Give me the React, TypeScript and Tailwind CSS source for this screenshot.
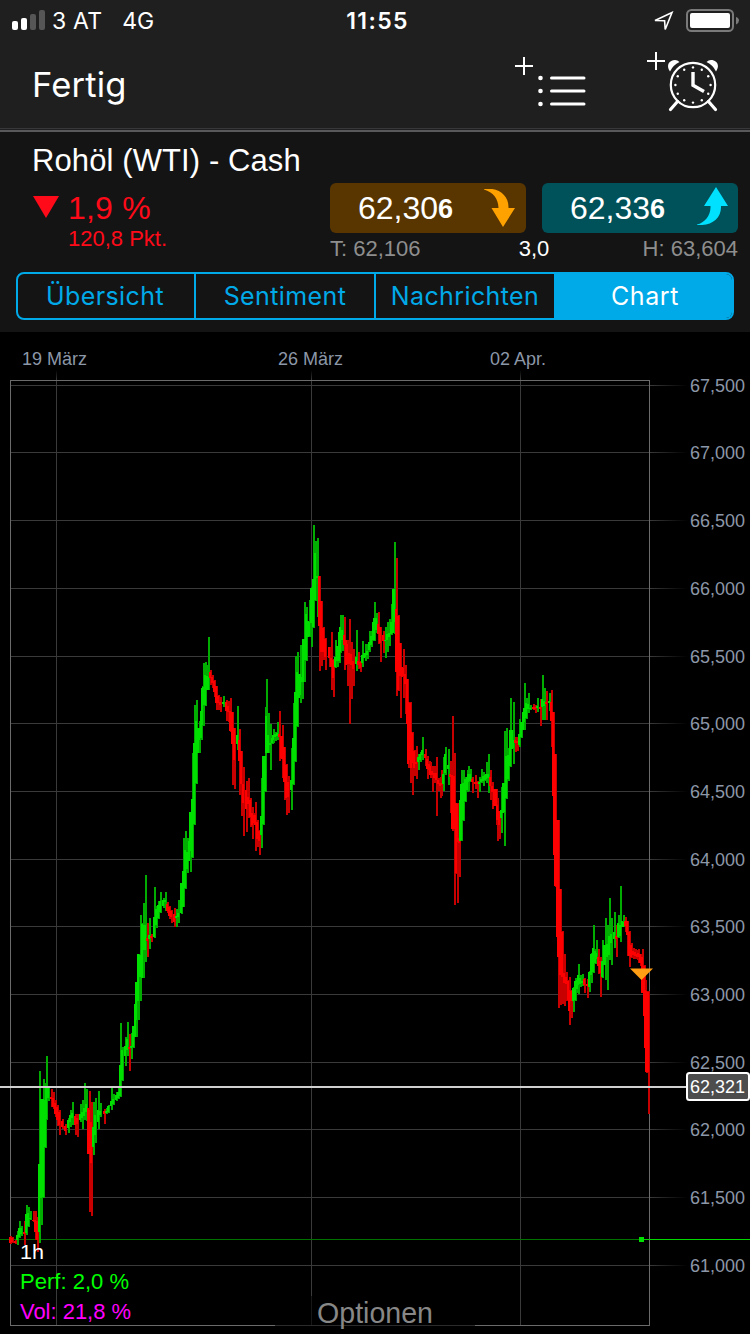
import React from 'react';

type Candle = {
  x: number;
  high: number;
  low: number;
  top: number;
  bottom: number;
  up: boolean;
};

// One entry per candle: direction, x, high, low and, where the body does not
// fill most of the range, its top and bottom.
const SERIES = `
r10,1236,1244,1237,1243 r12,1237,1243 r15,1240,1244 g17,1231,1245,1235,1240 g19,1221,1238,1228,1237 g21,1226,1236
r24,1221,1245,1232,1234 g26,1205,1235,1214,1233 g28,1207,1227,1213,1226 g30,1211,1220,1218,1219 r33,1211,1222,1220,1221
r35,1211,1240,1220,1232 r37,1217,1252,1221,1240 g39,1071,1243,1164,1232 g41,1099,1225,1099,1198 g43,1079,1198,1099,1197
g45,1083,1148,1100,1147 g46,1056,1120,1086,1119 g48,1086,1101,1088,1098 r51,1089,1107,1097,1099 r53,1092,1109,1098,1107
r55,1100,1117 r57,1105,1126,1107,1120 r59,1110,1135,1112,1125 r62,1119,1129 r65,1124,1135,1126,1131 g68,1118,1133,1120,1128
g70,1110,1127,1115,1122 g72,1102,1125,1113,1118 r75,1114,1135,1116,1125 r77,1114,1137,1118,1124 g80,1104,1122,1114,1120
g82,1100,1129,1112,1118 g84,1083,1120,1108,1116 g86,1089,1121,1104,1112 r88,1108,1154,1108,1154 r89,1091,1212,1110,1154
r91,1102,1216,1122,1163 g93,1102,1155,1127,1147 g95,1098,1143,1115,1135 g98,1091,1129,1110,1122 g100,1103,1117,1111,1115
r104,1109,1124,1111,1114 g106,1108,1114,1111,1113 g108,1105,1113 g111,1087,1110,1101,1106 g113,1094,1105,1099,1104
g116,1092,1101,1095,1100 g118,1088,1099,1092,1098 g120,1023,1097,1065,1096 g122,1047,1081,1050,1080 g125,1037,1066,1046,1056
g127,1022,1056,1039,1050 r129,1034,1071,1047,1049 g131,1033,1059,1046,1048 g133,1026,1048,1026,1047 g135,1004,1037,1004,1037
g136,982,1037,982,1020 g138,954,1020,954,1001 g140,915,1001,955,977 g142,923,978,924,978 g143,903,978,925,950
g145,875,962,925,950 r147,923,957,938,941 g149,918,949,935,939 r151,934,942,936,938 g154,887,938,917,937 g156,906,928
g158,901,919,905,918 g160,892,913,901,912 g163,898,908 g165,892,911,900,902 r167,902,913 r169,906,919,907,916
r171,910,923,911,917 r174,908,927,914,922 g176,909,927,916,918 g178,900,923,913,917 g181,883,914,883,913 g183,838,907,871,907
g185,831,889,850,888 g187,838,873,852,869 g189,841,861,841,861 g190,812,872,812,851 g192,753,858,799,857 g194,705,825,743,824
g196,700,784,721,783 g198,728,753,728,753 g199,721,753,728,740 g201,711,740,711,738 g202,686,726,688,725 g203,663,726,687,705
g205,662,706,675,705 g207,665,690,676,690 g208,637,690,677,690 r210,670,685,672,678 r212,675,688,677,683 r214,680,697,681,692
r216,686,710,686,703 r218,695,710,696,703 r220,697,712,702,705 g223,696,707,702,704 r226,700,721,702,711 r228,701,722,706,712
r230,698,732,711,731 r232,712,785,712,744 r234,728,789,728,760 g237,706,750,735,744 r239,729,795,740,761 r241,751,816,751,784
r243,767,836,784,803 r246,781,832,790,809 r248,778,818,797,804 r250,798,827,800,817 r252,807,839,813,825 r254,813,825
r255,802,851,815,825 r257,820,847,822,839 r259,830,855,831,841 g261,778,848,816,835 g263,756,825,756,824 g265,707,792,756,791
g266,679,753,716,753 g268,713,753,735,753 g270,724,770,743,745 g272,735,744,738,743 g273,729,743,735,740 g275,732,741,734,737
g277,722,740,733,736 r279,711,761,734,737 r281,736,758,736,758 r282,725,778,736,759 r284,747,800,747,782 r286,764,815,765,798
r288,776,813,782,797 g291,748,810,780,790 g293,703,785,738,784 g295,656,762,692,761 g297,652,727,672,726 g299,674,698,674,698
g300,645,703,674,695 g302,653,699,677,682 g303,639,682,639,682 g304,602,682,639,660 g306,607,661,614,660 g308,621,637,621,637
g309,600,637,622,636 g311,587,647,588,623 g313,525,628,579,627 g315,541,601,553,600 g317,538,617,576,578 r319,576,671,576,626
r321,601,666,601,652 r323,627,660,628,652 r325,638,670,639,657 r329,647,667,647,658 r331,632,690,658,667 r333,659,697,660,678
g335,640,668,657,667 g337,646,667,646,661 g339,627,663,632,661 g340,615,653,627,652 g342,615,651,630,640 r344,617,670,635,645
r346,640,665,640,665 r347,640,686,644,664 r349,619,724,653,664 r351,642,699,654,665 r353,649,686,661,669 g356,630,671,657,664
r358,652,669,661,665 r360,661,672,662,668 g362,641,667,655,663 g364,653,658,653,658 g365,644,661,653,657 g367,644,659,651,655
g369,631,652,642,650 g371,631,647,636,645 g373,622,641,622,640 g374,602,641,618,640 g376,613,633,618,630 r378,612,644,624,634
r380,627,662,627,643 r383,631,653,635,641 g385,627,658,640,641 g387,622,652,634,640 g389,619,646,633,637 g391,604,635,622,634
g393,589,633,589,633 g394,542,634,589,622 r396,558,696,609,672 r398,615,691,616,690 r400,643,718,643,676 r402,667,677,667,677
r403,649,698,668,676 r405,665,714,674,684 r407,679,726,679,724 r408,702,768,702,764 r410,702,783,703,760 r411,732,768,732,768
r412,732,795,733,763 r414,750,776,751,768 r416,746,779,762,764 g418,754,770,757,762 g420,752,762 g422,737,760,750,755
r425,749,766,754,758 r427,756,779,759,769 r429,761,772,764,770 r430,762,778,766,775 r432,766,792,771,775 r434,766,783,773,778
r436,757,816,773,780 r438,778,791,780,784 r440,777,798,783,786 r441,770,796,783,785 g443,757,791,774,784 g445,747,775,754,773
g448,749,785,765,769 r450,761,813,774,777 r452,716,831,775,829 r454,753,905,776,829 r456,803,874,803,873 r457,803,903,804,842
r459,811,877,838,843 g460,800,841,800,841 g461,770,841,784,840 g463,770,821,783,820 g465,777,802,779,801 g467,770,792,777,790
g468,766,791,774,782 g470,769,782,774,781 r472,777,793,779,782 r475,775,789,782,784 r477,781,798,782,784 g479,777,792,782,784
g481,769,783,779,782 g483,772,786,776,781 g485,774,781,775,780 g486,762,783,774,779 g488,754,793,774,778 r490,770,800,777,786
r492,782,809,786,792 r494,789,806,789,806 r496,789,825,789,806 r497,798,841,805,820 r499,811,839,811,825 g501,787,833,810,818
g503,783,813,783,813 g504,731,846,783,812 g506,728,799,756,798 g508,748,781,755,779 g510,698,767,730,766 g512,730,749,730,749
g513,702,764,740,748 r515,737,752,740,743 r517,737,751,741,743 g519,719,747,734,745 g521,722,738,722,737 g523,712,730,712,730
g524,683,730,708,722 g526,698,719,703,718 g528,693,713,704,709 g530,705,710,708,709 r533,704,710,707,709 r535,705,713,707,709
g537,698,712,706,708 r540,699,726,707,709 g542,675,720,699,707 g544,688,720,701,706 r546,691,720,702,704 g549,693,711,701,703
r551,690,747,702,721 r553,712,796,712,796 r554,754,855,754,855 r555,754,887,754,886 r557,820,937,820,937 r558,820,1008,820,957
r560,889,1005,889,975 r562,931,1004,932,977 r564,954,1006,973,983 r566,972,1001,977,984 r568,980,1000,981,1000
r569,977,1025,990,1011 r571,990,1018,991,1001 g573,987,1012,988,1001 g575,978,1001,981,1000 g577,980,993,980,989
g578,964,994,975,985 g580,975,987,978,984 g582,974,986,981,983 r584,978,993,979,985 r587,979,998,984,986 g589,971,992,972,987
g591,953,983,954,975 g593,925,973,948,972 g595,949,964,951,963 g596,940,963,953,959 r598,949,974,957,966 r600,957,997,961,973
g602,940,978,961,977 g604,945,965,945,965 g605,918,980,945,965 g607,925,990,944,957 g609,898,960,936,955 g611,918,965,934,943
g614,912,948,932,939 r616,925,957,936,939 g618,915,938,923,937 g620,886,942,925,936 g622,921,927,921,927 g623,915,927,922,927
r625,917,932,921,926 r627,921,956,921,935 r629,931,967,932,956 r631,943,958,945,957 r633,948,959,951,955 r635,949,959,952,956
r637,950,960,954,957 r638,949,963,953,957 r640,954,966,954,963 r642,949,993,957,993 r644,965,1017,966,1016
r645,980,1049,990,1048 r646,991,1073,991,1072 r648,991,1114,992,1072
`;

const candles: Candle[] = SERIES.trim()
  .split(/\s+/)
  .map((entry) => {
    const [x, high, low, top, bottom] = entry.slice(1).split(',').map(Number);
    const inset = Math.round((low - high) * 0.15);
    return {
      x,
      high,
      low,
      top: top ?? high + inset,
      bottom: bottom ?? low - inset,
      up: entry[0] === 'g',
    };
  });

const priceTicks = [
  { label: '67,500', y: 385 },
  { label: '67,000', y: 452 },
  { label: '66,500', y: 520 },
  { label: '66,000', y: 588 },
  { label: '65,500', y: 656 },
  { label: '65,000', y: 723 },
  { label: '64,500', y: 791 },
  { label: '64,000', y: 859 },
  { label: '63,500', y: 926 },
  { label: '63,000', y: 994 },
  { label: '62,500', y: 1062 },
  { label: '62,000', y: 1129 },
  { label: '61,500', y: 1197 },
  { label: '61,000', y: 1265 },
];

const dateTicks = [
  { label: '19 März', line: 56, x: 22, width: 65 },
  { label: '26 März', line: 311, x: 278, width: 65 },
  { label: '02 Apr.', line: 520, x: 490, width: 56 },
];

const StatusBar: React.FC = () => (
  <div className="flex h-10 items-center justify-between pl-3 pr-[11px] text-[23px] text-white">
    <div className="flex w-[320px] items-center">
      <svg width="34" height="20" viewBox="0 0 34 20">
        <rect x="0" y="11" width="6" height="9" rx="2" fill="#fff" />
        <rect x="9" y="8" width="6" height="12" rx="2" fill="#fff" />
        <rect x="18" y="4" width="6" height="16" rx="2" fill="#565656" />
        <rect x="27" y="0" width="6" height="20" rx="2" fill="#565656" />
      </svg>
      <span className="ml-[6px] pt-0.5 leading-[40px] tracking-[0.2px]">3 AT</span>
      <span className="ml-5 pt-0.5 leading-[40px]">4G</span>
    </div>
    <span className="pt-0.5 pl-1 font-semibold tracking-[1.4px]">11:55</span>
    <div className="flex w-[320px] items-center justify-end">
      <svg width="21" height="20" viewBox="0 0 21 20" className="mt-0.5 mr-3">
        <path d="M2 9.5L19 1.5L12.2 18.5L11.6 9.7Z" fill="none" stroke="#fff" strokeWidth="1.6" />
      </svg>
      <svg width="53" height="24" viewBox="0 0 53 24" className="mt-px">
        <rect x="1" y="1" width="46" height="21" rx="4.5" fill="none" stroke="#7a7a7a" strokeWidth="2" />
        <rect x="4" y="4" width="40" height="15" rx="2" fill="#fff" />
        <path d="M50 8Q53 9 53 11.5Q53 14 50 15.5Z" fill="#7a7a7a" />
      </svg>
    </div>
  </div>
);

const AddToListIcon: React.FC = () => (
  <svg width="74" height="62" viewBox="514 50 74 62" stroke="#fff" fill="none">
    <path d="M515 66H533M524 57V75" strokeWidth="2" />
    <path d="M551.5 78H584M551.5 91H584M551.5 104H584" strokeWidth="3" strokeLinecap="round" />
    <g fill="#fff" stroke="none">
      <circle cx="540.5" cy="78" r="2.3" />
      <circle cx="540.5" cy="91" r="2.3" />
      <circle cx="540.5" cy="104" r="2.3" />
    </g>
  </svg>
);

const AddAlarmIcon: React.FC = () => (
  <svg width="74" height="62" viewBox="646 50 74 62" stroke="#fff" fill="none">
    <path d="M647 61H665M656 52V70" strokeWidth="2" />
    <path d="M670 71.5C665.5 65 669.5 60 675 60Q677.5 60 679.5 62Q673 65 670 71.5Z" fill="#fff" stroke="none" />
    <path d="M716 71.5C720.5 65 716.5 60 711 60Q708.5 60 706.5 62Q713 65 716 71.5Z" fill="#fff" stroke="none" />
    <circle cx="693" cy="85" r="22.2" strokeWidth="2.2" />
    <path d="M677.5 101.5L670.5 109.5M708.5 101.5L715.5 109.5" strokeWidth="3.2" strokeLinecap="round" />
    <path d="M693 72V85.2L704 91.5" strokeWidth="3.4" />
    {Array.from({ length: 12 }, (_, i) => (
      <circle
        key={i}
        cx={693 + 17.6 * Math.sin((i * Math.PI) / 6)}
        cy={85 - 17.6 * Math.cos((i * Math.PI) / 6)}
        r="1.2"
        fill="#fff"
        stroke="none"
      />
    ))}
  </svg>
);

const NavBar: React.FC = () => (
  <div className="flex h-[88px] items-start justify-between pl-[32px] pr-[30px]">
    <button className="pt-px text-[34.5px] leading-[88px] font-normal tracking-[0.2px] text-white">Fertig</button>
    <div className="flex gap-[58px] pt-[10px]">
      <AddToListIcon />
      <AddAlarmIcon />
    </div>
  </div>
);

const QuotePanel: React.FC = () => (
  <section className="h-[200px] bg-[#141414] pr-3 font-['Liberation_Sans',sans-serif]">
    <h1 className="h-[51px] pl-8 text-[31px] leading-[58px] tracking-[0.1px] text-white">Rohöl (WTI) - Cash</h1>
    <div className="flex justify-between pl-[33px]">
      <div className="flex text-[#ff0a19]">
        <svg width="27" height="22" viewBox="0 0 27 22" className="mt-[13px]">
          <path d="M0 0H26L13 22Z" fill="#ff0a19" />
        </svg>
        <div className="ml-[8px]">
          <div className="h-[42px] text-[32px] leading-[50px] tracking-[0.2px]">1,9 %</div>
          <div className="text-[22px] leading-[27px]">120,8 Pkt.</div>
        </div>
      </div>
      <div className="w-[408px]">
        <div className="flex gap-4">
          <button className="flex h-[50px] w-[196px] items-start rounded-md bg-[#593600] pl-[28px] text-white">
            <span className="text-[32px] leading-[50px]">62,30</span>
            <span className="text-[27px] leading-[53px] font-bold">6</span>
            <svg width="32" height="38" viewBox="0 0 32 38" className="mt-[6px] mr-[10px] ml-auto">
              <path d="M0 0C14 -2 25 6 24.5 19H31L19 38L7.5 19H14.5C14.5 10 9 3 0 0.5Z" fill="#ffa200" />
            </svg>
          </button>
          <button className="flex h-[50px] w-[196px] items-start rounded-md bg-[#00525a] pl-[28px] text-white">
            <span className="text-[32px] leading-[50px]">62,33</span>
            <span className="text-[27px] leading-[53px] font-bold">6</span>
            <svg width="32" height="38" viewBox="0 0 32 38" className="mt-1 mr-[10px] ml-auto">
              <path d="M1 38C15 39 25.5 32 25 19H32L20 0L8 19H14.5C15 28 9 36 1 37.5Z" fill="#00e1ff" />
            </svg>
          </button>
        </div>
        <div className="flex h-[39px] justify-between text-[22px] leading-[32px] text-[#8e8e8e]">
          <span className="w-[150px]">T: 62,106</span>
          <span className="text-white">3,0</span>
          <span className="w-[150px] text-right">H: 63,604</span>
        </div>
      </div>
    </div>
    <div className="ml-4 flex h-12 w-[718px] overflow-hidden rounded-lg border-2 border-[#00a9e8] font-['Inter',sans-serif] text-[25px] leading-[44px] tracking-[0.4px] text-[#00a9e8]">
      <button className="w-[178px] border-r-2 border-[#00a9e8] pr-0.5">Übersicht</button>
      <button className="w-[180px] border-r-2 border-[#00a9e8]">Sentiment</button>
      <button className="w-[178px]">Nachrichten</button>
      <button className="flex-1 bg-[#00a9e8] pl-1 tracking-[0.6px] text-white">Chart</button>
    </div>
  </section>
);

const PriceChart: React.FC = () => (
  <svg
    width="750"
    height="1002"
    viewBox="0 332 750 1002"
    className="block bg-black font-['Liberation_Sans',sans-serif]"
    shapeRendering="crispEdges"
  >
    <defs>
      <linearGradient id="tickFade" x1="0" x2="1" y1="0" y2="0">
        <stop offset="0" stopColor="#3a3a3a" />
        <stop offset="1" stopColor="#000" />
      </linearGradient>
      <linearGradient id="dateFade" x1="0" x2="0" y1="0" y2="1">
        <stop offset="0" stopColor="#000" />
        <stop offset="1" stopColor="#3a3a3a" />
      </linearGradient>
    </defs>

    {priceTicks.map((tick) => (
      <g key={tick.label}>
        <rect x="11" y={tick.y} width="638" height="1" fill="#3a3a3a" />
        <rect x="650" y={tick.y} width="38" height="1" fill="url(#tickFade)" />
        <text x="690" y={tick.y + 7} fontSize="18" fill="#8c97a8" textLength="55" lengthAdjust="spacingAndGlyphs">
          {tick.label}
        </text>
      </g>
    ))}
    {dateTicks.map((tick) => (
      <g key={tick.label}>
        <rect x={tick.line} y="370" width="1" height="10" fill="url(#dateFade)" />
        <rect x={tick.line} y="380" width="1" height="945" fill="#3a3a3a" />
        <text x={tick.x} y="365" fontSize="18" fill="#8c97a8" textLength={tick.width} lengthAdjust="spacingAndGlyphs">
          {tick.label}
        </text>
      </g>
    ))}
    <rect x="10.5" y="380.5" width="639" height="945" fill="none" stroke="#6b6b6b" />

    <rect x="0" y="1239" width="641" height="1" fill="#007200" />
    <rect x="641" y="1239" width="109" height="1" fill="#00d800" />
    <rect x="639" y="1237" width="5" height="5" fill="#00e000" />

    {candles.map((c, i) => (
      <g key={i}>
        <rect x={c.x} y={c.high} width="2" height={c.low - c.high} fill={c.up ? '#00ad00' : '#c90000'} />
        <rect
          x={c.x - 1}
          y={c.top}
          width="2"
          height={Math.max(1, c.bottom - c.top)}
          fill={c.up ? '#00e000' : '#ff0000'}
        />
      </g>
    ))}

    <path d="M630 968.5H653L641.5 980Z" fill="#ff9d14" shapeRendering="auto" />
    <rect x="0" y="1086" width="687" height="2" fill="#cfcfcf" />
    <rect x="687" y="1073" width="62" height="27" rx="2.5" fill="#4d4d4d" stroke="#fff" strokeWidth="2" shapeRendering="auto" />
    <text x="690" y="1093" fontSize="18" fill="#fff" textLength="55" lengthAdjust="spacingAndGlyphs">62,321</text>

    <text x="20" y="1259" fontSize="21" fill="#fff" textLength="24" lengthAdjust="spacingAndGlyphs">1h</text>
    <text x="20" y="1289" fontSize="22" fill="#00ff00" textLength="109" lengthAdjust="spacingAndGlyphs">Perf: 2,0 %</text>
    <text x="20" y="1319" fontSize="22" fill="#ff00ff" textLength="111" lengthAdjust="spacingAndGlyphs">Vol: 21,8 %</text>

    <rect x="275" y="1296" width="200" height="38" fill="#000" fillOpacity="0.6" />
    <text x="317" y="1323" fontSize="29" fill="#878787" textLength="116" lengthAdjust="spacingAndGlyphs">Optionen</text>
  </svg>
);

const App: React.FC = () => {
  return (
    <main className="h-[1334px] w-[750px] overflow-hidden bg-black font-['Inter',sans-serif]">
      <header className="h-[132px] border-b-2 border-[#59595b] bg-[#1f1f1f]">
        <StatusBar />
        <NavBar />
        <div className="h-px bg-[#38383a]" />
      </header>
      <QuotePanel />
      <PriceChart />
    </main>
  );
};

export default App;
